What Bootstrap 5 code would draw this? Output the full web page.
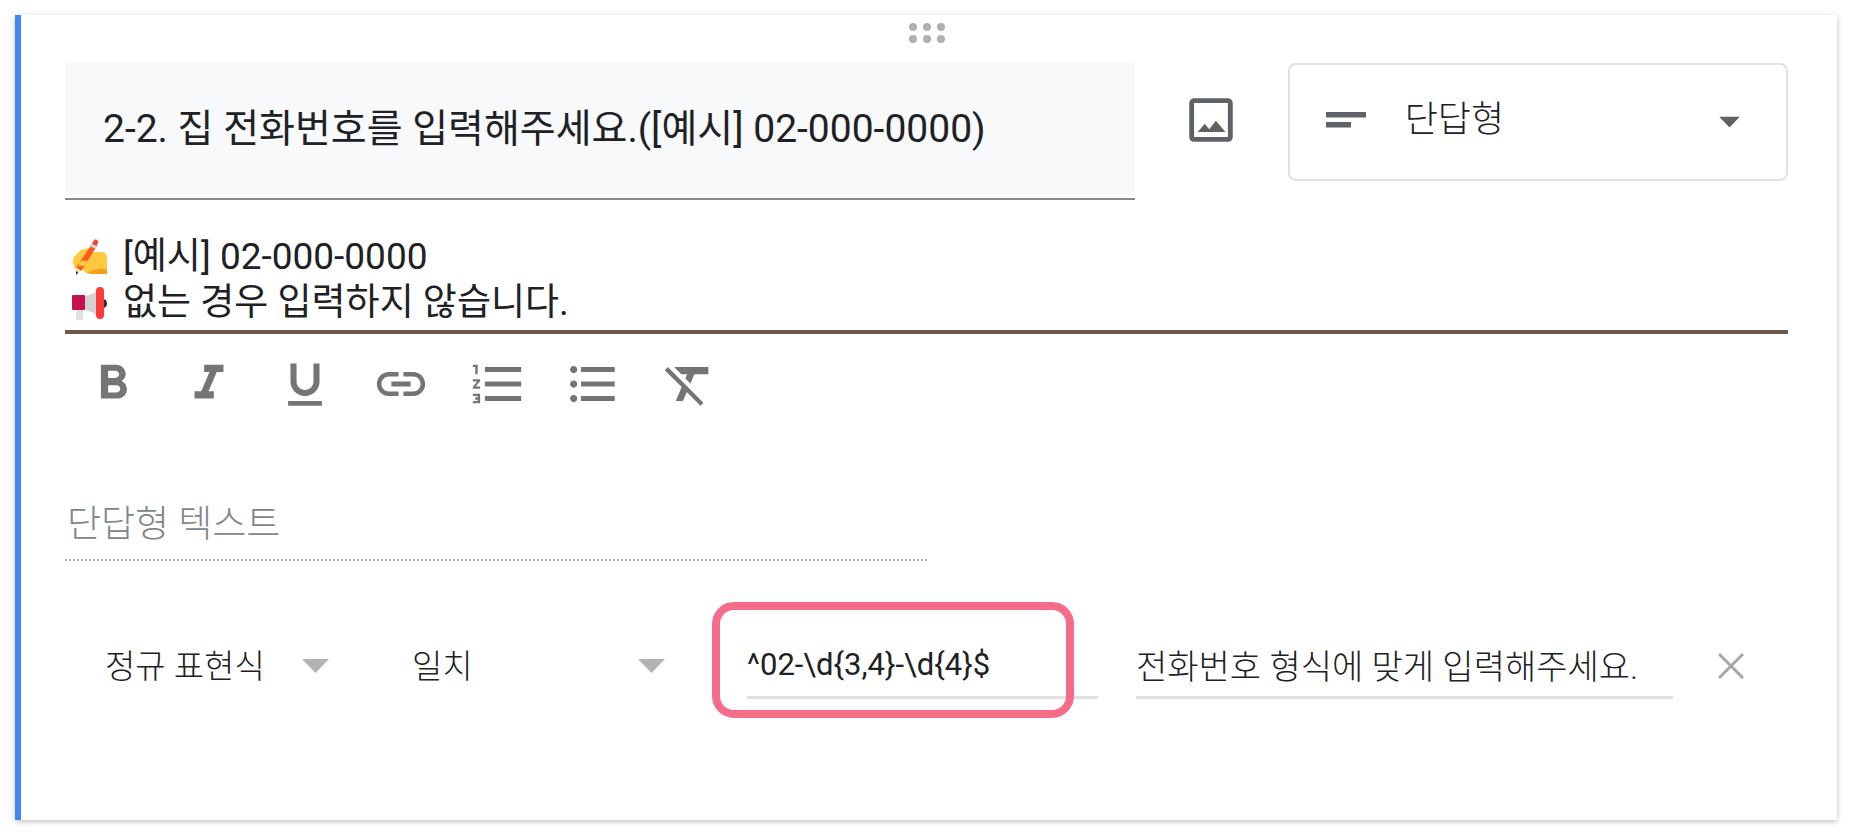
<!DOCTYPE html>
<html lang="ko">
<head>
<meta charset="utf-8">
<meta name="viewport" content="width=device-width, initial-scale=1">
<title>설문지 질문 편집</title>
<link href="https://cdn.jsdelivr.net/npm/bootstrap@5.3.0/dist/css/bootstrap.min.css" rel="stylesheet">
<style>
  body { font-family: Roboto, "Noto Sans CJK KR", sans-serif; color: #202124; background: #fff; padding: 15px 15px 14px; }
  input, textarea, select, button { color: inherit; font-family: inherit; }
  .question { border-left: 6px solid #4285f4; padding: 0 49px 121px 44px; background: #fff; box-shadow: 0 2px 5px rgba(0,0,0,.2), 0 0 8px rgba(0,0,0,.06); }
  .drag { height: 48px; padding-top: 8px; }
  .head-grid { display: grid; grid-template-columns: 1069fr 153fr 500fr; }
  .title-box { border-bottom: 2px solid #878b91; padding-bottom: 3px; }
  .title-input { display: block; width: 100%; height: 132px; padding: 0 38px 8px; border: 0; border-radius: 0; background: #f8f9fa; font-size: 39px; line-height: 48px; }
  .flat-btn { padding: 0; border: 0; background: none; line-height: 0; }
  .image-btn { height: 113px; color: #5f6368; }
  .type-box { height: 118px; border: 2px solid #dfe1e5; border-radius: 8px; color: #5f6368; padding: 0 0 4px 36px; }
  .pick { appearance: none; border: 0; background: none; width: 100%; padding: 0; font-weight: 300; }
  .type-box .pick { color: #202124; font-size: 36px; line-height: 54px; padding-left: 39px; }
  .type-box .caret { right: 46px; }
  .caret { top: 50%; transform: translateY(-50%); pointer-events: none; }
  .desc-box { margin-top: 34px; border-bottom: 4px solid #6d574b; padding-left: 7px; }
  .desc-marks { width: 36px; margin-right: 15px; padding-top: 5px; gap: 11px; }
  .desc-input { display: block; height: 96px; padding: 0; border: 0; resize: none; overflow: hidden; background: none; font-size: 37px; line-height: 46px; }
  .tools { gap: 38px; padding: 21px 0 0 19px; color: #757575; }
  .answer { display: block; width: 50%; height: 64px; margin-top: 84px; padding: 0 2px 8px; border: 0; border-bottom: 2px dotted #b0b0b0; background: none; font-size: 37px; font-weight: 300; }
  .answer::placeholder { color: #80868b; opacity: 1; }
  .rules { display: grid; grid-template-columns: 224fr 83fr 253fr 82fr 351fr 38fr 537fr 115fr; padding: 71px 0 0 40px; align-items: center; }
  .rules .pick { font-size: 33px; line-height: 50px; padding-top: 3px; }
  .line-input { display: block; width: 100%; height: 67px; padding: 0; border: 0; border-bottom: 3px solid #e0e0e0; background: none; }
  .regex { font-size: 31px; }
  .message { font-size: 34px; font-weight: 300; }
  .spot { left: -35px; right: 24px; top: -30px; bottom: -19px; border: 8px solid #f56c8a; border-radius: 22px; pointer-events: none; }
  .c1 { grid-column: 1; } .c3 { grid-column: 3; } .c5 { grid-column: 5; } .c7 { grid-column: 7; } .c8 { grid-column: 8; }
</style>
</head>
<body>
<form class="question" onsubmit="return false">
  <div class="drag text-center lh-1">
    <svg width="36" height="20" viewBox="0 0 36 20" fill="#b0b0b0" class="d-block mx-auto" aria-hidden="true"><circle cx="4" cy="4" r="4"/><circle cx="18" cy="4" r="4"/><circle cx="32" cy="4" r="4"/><circle cx="4" cy="16" r="4"/><circle cx="18" cy="16" r="4"/><circle cx="32" cy="16" r="4"/></svg>
  </div>

  <div class="head-grid">
    <div class="title-box">
      <input class="title-input" type="text" aria-label="질문" value="2-2. 집 전화번호를 입력해주세요.([예시] 02-000-0000)">
    </div>
    <button type="button" class="flat-btn image-btn" aria-label="이미지 추가">
      <svg width="58" height="58" viewBox="0 0 24 24" fill="currentColor"><path d="M19 5v14H5V5h14m0-2H5c-1.100 0-2 .9-2 2v14c0 1.100.9 2 2 2h14c1.100 0 2-.9 2-2V5c0-1.100-.9-2-2-2zm-5 9.300l-2.700 3.500-1.900-2.300L6.500 17h11.500z"/></svg>
    </button>
    <div class="type-box d-flex align-items-center position-relative">
      <svg class="flex-shrink-0" width="40" height="16" viewBox="0 0 40 16" fill="currentColor" aria-hidden="true"><path d="M0 0h40v5.500H0zM0 10h25v5.500H0z"/></svg>
      <select class="pick" aria-label="질문 유형"><option>단답형</option></select>
      <svg class="caret position-absolute" width="21" height="11" viewBox="0 0 21 11" fill="currentColor" aria-hidden="true"><path d="M0 0h21L10.500 11z"/></svg>
    </div>
  </div>

  <div class="desc-box d-flex">
    <div class="desc-marks d-flex flex-column flex-shrink-0" aria-hidden="true">
      <svg width="36" height="36" viewBox="0 0 36 36"><path d="M9 11L17 9l3 4 9 0c4 0 6 2 6 6v15H20c-3 1-7 0-9-3l-7-1c-3-3-4-8-2-12z" fill="#ffc83d"/><path d="M35 30v5H20c-2 0-4-1-6-2 7 0 8-3 13-3z" fill="#f59f1a"/><path d="M20 5l5 2L9 32l-5-3z" fill="#ff5722"/><path d="M20 5l1.500-3C23-1 27 1 26 4l-1.500 3z" fill="#f44336"/><path d="M20 5l5 2.200-1.500 2.500-5-2.200z" fill="#cfd8dc"/><path d="M4.500 28.500l4 3L4 36z" fill="#ffe0b2"/><path d="M4 32l2.500 1.500L4 36z" fill="#37393b"/><path d="M7 24c3-4 7-3 9-1 2 1 2 4 0 5-3 0-5-3-9 0z" fill="#ffc83d"/></svg>
      <svg width="36" height="36" viewBox="0 0 36 36"><path d="M4 23h7v10c-2 2-5 2-7 0z" fill="#e0e0e0"/><path d="M32 13c4 1 4 8 0 9z" fill="#303030"/><path d="M13 10c6-1 9-3 14-7v29c-5-5-8-7-14-8z" fill="#d2d2d2"/><rect y="9" width="13" height="15" rx="1" fill="#c90f4c"/><rect x="24" y="1" width="8" height="32" rx="4" fill="#ff3838"/></svg>
    </div>
    <textarea class="desc-input flex-grow-1" rows="2" aria-label="설명">[예시] 02-000-0000
없는 경우 입력하지 않습니다.</textarea>
  </div>

  <div class="tools d-flex" role="toolbar" aria-label="서식">
    <button type="button" class="flat-btn" aria-label="굵게"><svg width="58" height="58" viewBox="0 0 24 24" fill="currentColor"><path d="M15.600 10.790c.97-.67 1.650-1.770 1.650-2.790 0-2.260-1.750-4-4-4H7v14h7.040c2.090 0 3.710-1.700 3.710-3.790 0-1.520-.86-2.820-2.150-3.420zM10 6.500h3c.83 0 1.500.67 1.500 1.500s-.67 1.500-1.500 1.500h-3v-3zm3.500 9H10v-3h3.500c.83 0 1.500.67 1.500 1.500s-.67 1.500-1.500 1.500z"/></svg></button>
    <button type="button" class="flat-btn" aria-label="기울임꼴"><svg width="58" height="58" viewBox="0 0 24 24" fill="currentColor"><path d="M10 4v3h2.210l-3.420 8H6v3h8v-3h-2.210l3.420-8H18V4z"/></svg></button>
    <button type="button" class="flat-btn" aria-label="밑줄"><svg width="58" height="58" viewBox="0 0 24 24" fill="currentColor"><path d="M12 17c3.310 0 6-2.690 6-6V3.500h-2.500V11c0 1.930-1.570 3.500-3.500 3.500S8.500 12.930 8.500 11V3.500H6V11c0 3.310 2.690 6 6 6zm-7 2v2h14v-2H5z"/></svg></button>
    <button type="button" class="flat-btn" aria-label="링크"><svg width="58" height="58" viewBox="0 0 24 24" fill="currentColor"><path d="M3.900 12c0-1.710 1.390-3.100 3.100-3.100h4V7H7c-2.760 0-5 2.240-5 5s2.240 5 5 5h4v-1.900H7c-1.710 0-3.100-1.390-3.100-3.100zM8 13h8v-2H8v2zm9-6h-4v1.900h4c1.710 0 3.100 1.390 3.100 3.100s-1.390 3.100-3.100 3.100h-4V17h4c2.760 0 5-2.240 5-5s-2.240-5-5-5z"/></svg></button>
    <button type="button" class="flat-btn" aria-label="번호 매기기 목록"><svg width="58" height="58" viewBox="0 0 24 24" fill="currentColor"><path d="M2 17h2v.5H3v1h1v.5H2v1h3v-4H2v1zm1-9h1V4H2v1h1v3zm-1 3h1.800L2 13.100v.9h3v-1H3.200L5 10.900V10H2v1zm5-6v2h15V5H7zm0 14h15v-2H7v2zm0-6h15v-2H7v2z"/></svg></button>
    <button type="button" class="flat-btn" aria-label="글머리기호 목록"><svg width="58" height="58" viewBox="0 0 24 24" fill="currentColor"><path d="M4 10.500c-.83 0-1.500.67-1.500 1.500s.67 1.500 1.500 1.500 1.500-.67 1.500-1.500-.67-1.500-1.500-1.500zm0-6c-.83 0-1.500.67-1.500 1.500S3.170 7.500 4 7.500 5.500 6.830 5.500 6 4.830 4.500 4 4.500zm0 12c-.83 0-1.500.68-1.500 1.500s.68 1.500 1.500 1.500 1.500-.68 1.500-1.500-.67-1.500-1.500-1.500zM7 19h14v-2H7v2zm0-6h14v-2H7v2zm0-8v2h14V5H7z"/></svg></button>
    <button type="button" class="flat-btn" aria-label="서식 삭제"><svg width="58" height="58" viewBox="0 0 24 24" fill="currentColor"><path d="M3.270 5L2 6.270l6.970 6.970L6.500 19h3l1.570-3.660L16.730 21 18 19.730 3.550 5.270 3.270 5zM6 5v.18L8.820 8h2.400l-.72 1.680 2.100 2.100L14.210 8H20V5H6z"/></svg></button>
  </div>

  <input class="answer" type="text" placeholder="단답형 텍스트" aria-label="단답형 텍스트" disabled>

  <div class="rules">
    <div class="c1 position-relative">
      <select class="pick" aria-label="확인 방식"><option>정규 표현식</option></select>
      <svg class="caret position-absolute end-0" width="27" height="14" viewBox="0 0 27 14" fill="#b3b3b3" aria-hidden="true"><path d="M0 0h27L13.500 14z"/></svg>
    </div>
    <div class="c3 position-relative">
      <select class="pick" aria-label="조건"><option>일치</option></select>
      <svg class="caret position-absolute end-0" width="27" height="14" viewBox="0 0 27 14" fill="#b3b3b3" aria-hidden="true"><path d="M0 0h27L13.500 14z"/></svg>
    </div>
    <div class="c5 position-relative">
      <input class="line-input regex" type="text" aria-label="패턴" value="^02-\d{3,4}-\d{4}$">
      <div class="spot position-absolute"></div>
    </div>
    <div class="c7"><input class="line-input message" type="text" aria-label="맞춤 오류 텍스트" value="전화번호 형식에 맞게 입력해주세요."></div>
    <button type="button" class="flat-btn c8" aria-label="확인 규칙 삭제"><svg width="26" height="26" viewBox="0 0 26 26" fill="none" stroke="#a6a6a6" stroke-width="3"><path d="M1 1l24 24M25 1L1 25"/></svg></button>
  </div>
</form>
<script src="https://cdn.jsdelivr.net/npm/bootstrap@5.3.0/dist/js/bootstrap.bundle.min.js"></script>
</body>
</html>
